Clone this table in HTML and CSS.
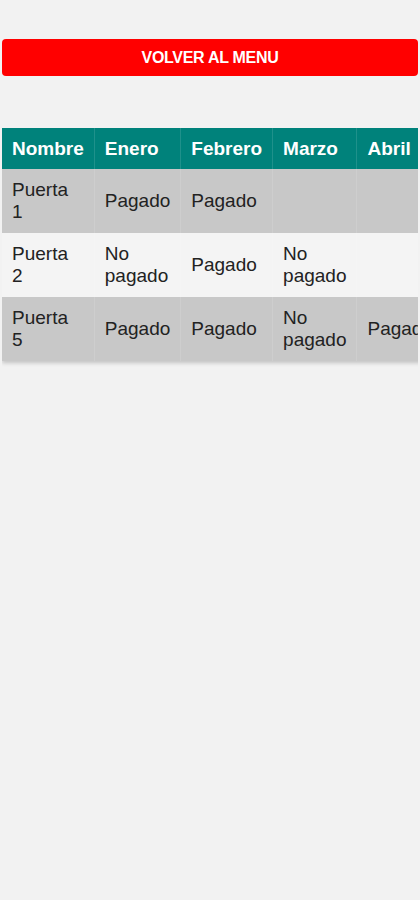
FILE: index.html
```html
<!DOCTYPE html>
<html>

<head>
    <meta charset="UTF-8">
    <meta name="viewport" content="width=device-width, initial-scale=1.0">
    <title>Pagos</title>
    <link rel="stylesheet" href="styles.css">
</head>

<body>

    <div class="volver">VOLVER AL MENU</div>

    <div class="tabla">
        <table>
            <thead>
                <tr>
                    <th>Nombre</th>
                    <th>Enero</th>
                    <th>Febrero</th>
                    <th>Marzo</th>
                    <th>Abril</th>
                    <th>Mayo</th>
                    <th>Junio</th>
                </tr>
            </thead>
            <tbody>
                <tr>
                    <td>Puerta 1</td>
                    <td>Pagado</td>
                    <td>Pagado</td>
                    <td></td>
                    <td></td>
                    <td></td>
                    <td></td>
                </tr>
                <tr>
                    <td>Puerta 2</td>
                    <td>No pagado</td>
                    <td>Pagado</td>
                    <td>No pagado</td>
                    <td></td>
                    <td></td>
                    <td></td>
                </tr>
                <tr>
                    <td>Puerta 5</td>
                    <td>Pagado</td>
                    <td>Pagado</td>
                    <td>No pagado</td>
                    <td>Pagado</td>
                    <td></td>
                    <td></td>
                </tr>
            </tbody>
        </table>
    </div>

</body>

</html>
```

FILE: styles.css
```css
* {
    margin: 0;
    padding: 0;
    box-sizing: border-box;
}

body {
    background-color: #f2f2f2;
    font-family: "Liberation Sans", Arial, sans-serif;
    padding: 39px 2px 0;
}

.volver {
    height: 37px;
    line-height: 37px;
    text-align: center;
    color: #fff;
    font-size: 16px;
    font-weight: bold;
    letter-spacing: -0.3px;
    background-color: #ff0000;
    border-radius: 4px;
    cursor: pointer;
}

.tabla {
    margin-top: 52px;
    overflow-x: auto;
    scrollbar-width: none;
    padding-bottom: 6px;
}

table {
    border-collapse: collapse;
    box-shadow: 0 2px 4px rgba(0, 0, 0, 0.2);
    font-size: 19px;
}

th,
td {
    padding: 10px;
    text-align: left;
    border-left: 1px solid rgba(255, 255, 255, 0.12);
}

th:first-child,
td:first-child {
    border-left: none;
}

th {
    background-color: #00827b;
    color: #fff;
    font-weight: bold;
    height: 41px;
    line-height: 21px;
}

td {
    color: #222;
    height: 64px;
}

tbody tr:nth-child(odd) {
    background-color: #c8c8c8;
}

tbody tr:nth-child(even) {
    background-color: #f4f4f4;
}
```
